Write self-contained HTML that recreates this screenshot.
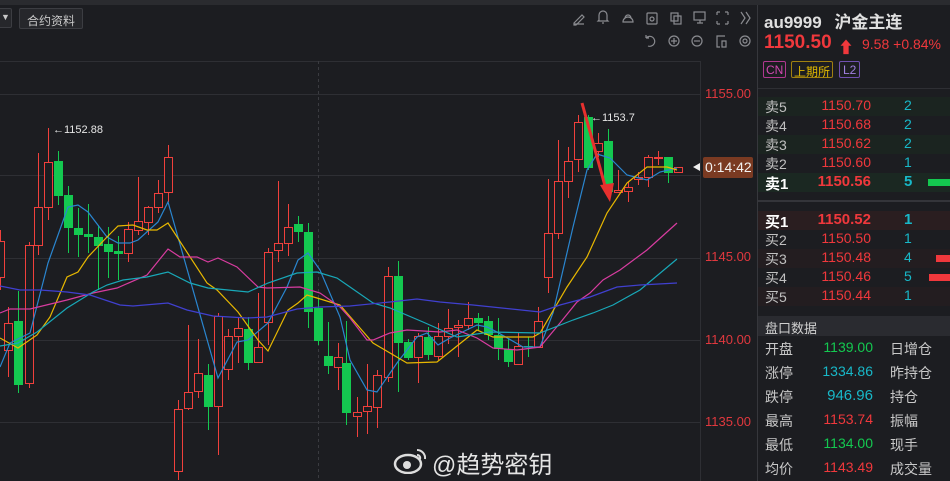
<!DOCTYPE html>
<html><head><meta charset="utf-8"><style>
*{margin:0;padding:0;box-sizing:border-box}
body{width:950px;height:481px;background:#1c1d21;overflow:hidden;position:relative;font-family:"Liberation Sans","Noto Sans CJK SC",sans-serif;color:#c8c8c8}
.abs{position:absolute;white-space:nowrap}
#top{left:0;top:0;width:950px;height:5px;background:#2a2b2f}
.btn{border:1px solid #3c3d42;background:#26272b;border-radius:2px;font-size:12px;color:#c8c8c8}
#panel{left:757px;top:5px;width:193px;height:476px;border-left:1px solid #36373c}
.row{position:absolute;left:758px;width:192px;height:19px;font-size:14px}
.row span{position:absolute;top:0px}
.ax{font-size:13px;color:#e0383e;left:705px}
</style></head><body>
<div id="top" class="abs"></div>
<div class="abs btn" style="left:-2px;top:8px;width:14px;height:20px"><span style="position:absolute;left:2px;top:3px;font-size:9px">▼</span></div>
<div class="abs btn" style="left:19px;top:8px;width:64px;height:21px;padding:3px 0 0 7px">合约资料</div>

<svg class="abs" style="left:0;top:0" width="757" height="481" id="ch">
<g stroke="#8a8b90" stroke-width="1.2" fill="none">
<path d="M574 23l8-8 2 2-8 8h-2z M574 24h10"/>
<path d="M599 20v-5a4 4 0 0 1 8 0v5l1 1h-10z M602 23h2"/>
<path d="M623 22a5 5 0 0 1 10 0z M625 18a3 3 0 0 1 6 0"/>
<rect x="647" y="13" width="10" height="11" rx="1"/><circle cx="652" cy="19" r="2"/>
<rect x="671" y="13" width="7" height="8"/><rect x="674" y="16" width="7" height="8"/>
<rect x="694" y="12" width="11" height="8"/><path d="M697 23h6 M700 20v3"/>
<path d="M717 12h3 M717 12v3 M728 12h-3 M728 12v3 M717 24h3 M717 24v-3 M728 24h-3 M728 24v-3"/>
<path d="M741 12l4 6-4 6 M746 12l4 6-4 6"/>
<path d="M646 38a5 5 0 1 1 2 8 M646 38v-3 M646 38h3"/>
<circle cx="674" cy="41" r="5"/><path d="M671 41h6 M674 38v6"/>
<circle cx="697" cy="41" r="5"/><path d="M694 41h6"/>
<path d="M725 36h-8v11h3 M722 41h4v6h-4z"/>
<circle cx="745" cy="41" r="5"/><circle cx="745" cy="41" r="2"/>
</g>
<g stroke="#2e2f34" stroke-width="1">
<path d="M0 61.5H700 M0 94.5H700 M0 175.5H700 M0 258.5H700 M0 340.5H700 M0 422.5H700"/>
<path d="M700.5 61V481"/>
</g>
<path d="M318.5 61V481" stroke="#3a3b40" stroke-dasharray="3 3"/>
<g id="candles"></g>
<g fill="none" stroke-width="1.2" id="mas"></g>
<path d="M582 103L607 193" stroke="#e8302e" stroke-width="3"/>
<path d="M600 185L610 202L614 183z" fill="#e8302e"/>
<text x="53" y="133" fill="#e6e6e6" font-size="11">←1152.88</text>
<text x="591" y="121" fill="#e6e6e6" font-size="11">←1153.7</text>
</svg>
<div class="abs ax" style="top:86px">1155.00</div>
<div class="abs ax" style="top:249px">1145.00</div>
<div class="abs ax" style="top:332px">1140.00</div>
<div class="abs ax" style="top:414px">1135.00</div>
<div class="abs" style="left:693px;top:163px;width:0;height:0;border-top:4px solid transparent;border-bottom:4px solid transparent;border-right:7px solid #eee"></div>
<div class="abs" style="left:703px;top:157px;width:50px;height:21px;background:#7a3a22;border-radius:2px;color:#f2f2f2;font-size:14px;padding:2px 0 0 2px">0:14:42</div>

<div class="abs" style="left:393px;top:446px;width:36px;height:28px">
<svg width="36" height="28"><ellipse cx="15" cy="18" rx="13" ry="9" fill="none" stroke="#ddd" stroke-width="2.5"/><circle cx="14" cy="19" r="4" fill="#ddd"/><path d="M24 4a8 8 0 0 1 8 9 M24 9a3 3 0 0 1 3 4" stroke="#ddd" stroke-width="2" fill="none"/></svg></div>
<div class="abs" style="left:432px;top:445px;font-size:24px;color:#e4e4e4">@趋势密钥</div>

<div id="panel" class="abs"></div>
<div class="abs" style="left:764px;top:8px;font-size:17px;color:#e0e0e0;font-weight:bold">au9999 <span style="margin-left:8px">沪金主连</span></div>
<div class="abs" style="left:764px;top:32px;font-size:19px;color:#f0383c;font-weight:bold">1150.50</div>
<div class="abs" style="left:838px;top:34px;font-size:16px;color:#f0383c;font-weight:bold">⬆</div>
<div class="abs" style="left:862px;top:36px;font-size:14px;color:#f0383c">9.58 +0.84%</div>
<div class="abs" style="left:763px;top:61px;height:17px;border:1px solid #b03890;color:#d048b0;font-size:12px;padding:1px 2px;border-radius:2px">CN</div>
<div class="abs" style="left:791px;top:61px;height:17px;border:1px solid #a08010;color:#e0b800;font-size:12px;padding:1px 2px;border-radius:2px">上期所</div>
<div class="abs" style="left:839px;top:61px;height:17px;border:1px solid #7050b0;color:#a080e0;font-size:12px;padding:1px 3px;border-radius:2px">L2</div>
<div class="abs" style="left:758px;top:88px;width:192px;height:1px;background:#2e2f34"></div>
<div id="ob"></div>
<div class="abs" style="left:758px;top:200px;width:192px;height:2px;background:#34353a"></div>
<div class="abs" style="left:758px;top:316px;width:192px;height:20px;background:#2a2b30;font-size:13px;padding:2px 0 0 7px;color:#d0d0d0">盘口数据</div>
<div id="pk"></div>
<script>
var C=[[0,241,277,230,290,'r'],[8,323,350,307,377,'r'],[18,321,385,291,393,'g'],[29,245,383,242,388,'r'],[38,207,245,153,255,'r'],[48,162,207,128,220,'r'],[58,161,196,151,205,'g'],[68,195,228,186,253,'g'],[78,228,235,208,257,'g'],[88,234,237,204,253,'g'],[98,237,246,225,290,'g'],[108,244,252,227,278,'g'],[118,251,254,236,280,'g'],[128,229,253,222,262,'r'],[138,221,230,177,235,'r'],[148,207,222,206,235,'r'],[158,193,207,180,213,'r'],[168,157,192,145,202,'r'],[178,409,471,400,480,'r'],[188,392,408,325,410,'r'],[198,373,391,339,398,'r'],[208,375,407,364,430,'g'],[218,316,406,313,455,'r'],[228,336,369,329,380,'r'],[238,328,336,318,363,'r'],[248,329,363,317,370,'g'],[258,347,362,293,363,'r'],[268,252,322,248,345,'r'],[278,243,250,181,262,'r'],[288,227,243,204,256,'r'],[298,224,232,216,242,'g'],[308,232,312,223,328,'g'],[318,308,341,298,345,'g'],[328,356,366,322,374,'g'],[338,357,367,343,390,'r'],[346,363,413,321,425,'g'],[357,412,416,397,437,'r'],[367,406,411,364,434,'r'],[377,375,407,370,428,'r'],[388,276,377,267,382,'r'],[398,276,343,261,392,'g'],[408,342,358,339,360,'g'],[418,336,357,333,383,'r'],[428,337,355,327,360,'g'],[438,336,356,323,360,'r'],[448,328,336,309,344,'r'],[458,325,327,320,357,'r'],[468,318,325,302,330,'r'],[478,318,323,313,330,'g'],[488,321,335,316,340,'g'],[498,335,349,318,360,'g'],[508,349,362,338,367,'g'],[518,346,364,332,365,'r'],[528,346,347,337,357,'g'],[538,321,347,307,348,'r'],[548,233,277,179,293,'r'],[558,181,233,140,239,'r'],[568,161,181,147,198,'r'],[578,122,159,115,172,'r'],[588,117,168,115,170,'g'],[598,143,151,133,157,'r'],[608,141,192,129,193,'g'],[618,190,192,170,193,'r'],[628,187,191,182,202,'r'],[638,177,179,172,185,'r'],[648,157,177,155,187,'r'],[658,157,158,151,165,'r'],[668,157,173,157,183,'g'],[678,167,172,167,172,'r']];
var s='';C.forEach(function(c){var x=c[0],col=c[5]=='r'?'#f0403c':'#14c850';s+='<line x1="'+(x+.5)+'" y1="'+c[3]+'" x2="'+(x+.5)+'" y2="'+c[4]+'" stroke="'+col+'"/>';
var h=Math.max(1,c[2]-c[1]);if(c[5]=='r')s+='<rect x="'+(x-3.5)+'" y="'+(c[1]+.5)+'" width="8" height="'+h+'" fill="#1c1d21" stroke="'+col+'"/>';else s+='<rect x="'+(x-4)+'" y="'+c[1]+'" width="9" height="'+h+'" fill="'+col+'"/>';});
document.getElementById('candles').innerHTML=s;
var M={'#2a86d0':'0,367 10,343 30,333 48,263 68,207 78,205 88,212 107,237 118,243 130,243 138,240 158,222 168,202 218,378 237,342 248,340 268,323 287,287 298,260 308,253 320,270 340,317 350,360 367,390 377,392 397,363 417,337 427,333 438,345 450,338 477,325 487,327 497,332 523,347 540,347 553,313 573,227 587,170 597,154 610,158 627,175 647,180 660,172 677,168',
'#e8b800':'0,338 18,348 37,335 50,317 67,277 78,272 88,257 107,237 118,226 133,225 147,230 157,230 168,223 207,283 217,290 238,312 258,340 268,351 288,310 298,303 307,295 317,298 340,305 373,343 407,363 437,362 477,330 493,337 533,337 540,333 567,287 587,257 607,213 627,183 647,167 667,167 677,170',
'#d83ca0':'0,313 10,309 30,309 67,300 93,293 117,288 147,275 168,249 180,257 197,257 208,262 218,258 237,267 258,287 267,288 300,287 320,293 340,307 350,318 367,340 373,340 390,333 407,330 440,332 457,330 477,338 493,348 517,350 540,347 560,323 577,302 590,293 603,280 620,270 647,250 677,223',
'#18a8b8':'0,346 18,343 37,332 67,308 93,292 107,285 123,280 147,277 168,272 190,283 208,288 248,292 268,283 297,273 317,272 337,278 350,287 373,303 390,308 423,322 457,337 490,332 540,333 573,320 593,313 613,305 640,290 677,259',
'#4040d0':'0,286 20,290 40,290 67,292 90,295 120,305 133,306 168,303 187,310 213,316 247,318 267,317 297,309 320,307 350,306 390,302 417,299 440,302 473,305 540,312 560,305 590,297 617,287 640,285 677,283'};
var m='';for(var k in M)m+='<polyline points="'+M[k]+'" stroke="'+k+'"/>';document.getElementById('mas').innerHTML=m;
var ob=[['卖5','1150.70','2',0,'#1b2420'],['卖4','1150.68','2',0,'#1c1d21'],['卖3','1150.62','2',0,'#1b2420'],['卖2','1150.60','1',0,'#1c1d21'],['卖1','1150.56','5',22,'#1b2822'],['买1','1150.52','1',0,'#2a1e20'],['买2','1150.50','1',0,'#1c1d21'],['买3','1150.48','4',14,'#231d20'],['买4','1150.46','5',21,'#1c1d21'],['买5','1150.44','1',0,'#231d20']];
var o='';ob.forEach(function(r,i){var y=i<5?97+i*19:211+(i-5)*19;var b=(i==4||i==5);
o+='<div class="row" style="top:'+y+'px;background:'+r[4]+';'+(b?'font-weight:bold;font-size:15px;':'')+'"><span style="left:7px;color:'+(b?'#fff':'#c0c0c0')+'">'+r[0]+'</span><span style="right:79px;color:#f0383c">'+r[1]+'</span><span style="left:146px;color:#18b8c8">'+r[2]+'</span>'+(r[3]?'<div style="position:absolute;right:0;top:6px;height:7px;width:'+r[3]+'px;background:'+(i<5?'#14c850':'#f0383c')+'"></div>':'')+'</div>';});
document.getElementById('ob').innerHTML=o;
var pk=[['开盘','1139.00','#14c850','日增仓'],['涨停','1334.86','#18b8c8','昨持仓'],['跌停','946.96','#18b8c8','持仓'],['最高','1153.74','#f0383c','振幅'],['最低','1134.00','#14c850','现手'],['均价','1143.49','#f0383c','成交量']];
var p='';pk.forEach(function(r,i){var y=339+i*24;p+='<div class="row" style="top:'+y+'px"><span style="left:7px">'+r[0]+'</span><span style="right:77px;color:'+r[2]+';font-size:'+(i==2?15:14)+'px">'+r[1]+'</span><span style="left:132px">'+r[3]+'</span></div>';});
document.getElementById('pk').innerHTML=p;
</script>
</body></html>
